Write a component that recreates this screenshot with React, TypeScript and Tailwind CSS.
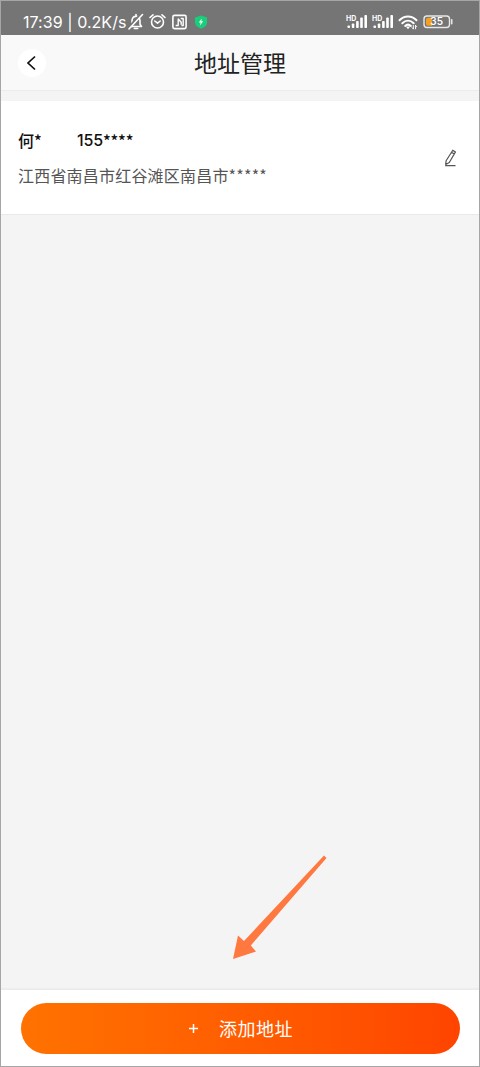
import type { ReactNode } from "react";

const addresses = [
  { id: 1, name: "何*", phone: "155", phoneMask: "****", detail: "江西省南昌市红谷滩区南昌市", mask: "*****" },
];

export default function App() {
  return (
    <div className="relative flex h-[1067px] w-[480px] flex-col overflow-hidden border border-[#a6a6a6] bg-[#f4f4f4] font-['Noto_Sans_CJK_SC',sans-serif]">
      <StatusBar />
      <Header title="地址管理" />
      <main className="flex-1 pt-[10px]">
        {addresses.map((address) => (
          <AddressRow key={address.id} {...address} />
        ))}
      </main>
      <Pointer />
      <footer className="h-[77px] border-t border-[#ebebeb] bg-white pr-[19px] pl-[20px] pt-[13px] shadow-[0_-1px_1px_#eeeeee]">
        <button className="flex h-[51px] w-full items-center rounded-full bg-linear-to-r from-[#ff7200] to-[#ff4400] pl-[167px] text-white">
          <Plus />
          <span className="ml-[20px] pb-[2px] text-[18px] leading-none tracking-[0.5px]">添加地址</span>
        </button>
      </footer>
    </div>
  );
}

function StatusBar() {
  return (
    <div className="flex h-[34px] shrink-0 items-center bg-[#757575] pt-[8px] pl-[22px] text-white">
      <span className="w-[105px] whitespace-nowrap font-[Inter,sans-serif] text-[16px] leading-none tracking-[0.05px]">
        17:39 | 0.2K/s
      </span>
      <StatusIcon width={16}>
        <path d="M2.5 13.5h11L12 11.300V8c0-2.900-1.500-4.600-4-4.600S4 5.100 4 8v3.300zM6.300 15.500h3.400M8 1.500v1.800" />
        <path d="M13 1-.5 16" stroke="#757575" strokeWidth="2.500" />
        <path d="M14.500 1.500 1 16" />
      </StatusIcon>
      <StatusIcon width={17} className="ml-[5px]">
        <circle cx="8.500" cy="9" r="6" />
        <path d="M5.800 8 8.500 10.200 11.200 8M1 4.500 4 1.800M16 4.500 13 1.800" />
      </StatusIcon>
      <StatusIcon width={16} className="ml-[5px]">
        <rect x="1.900" y="2.400" width="13.200" height="13.200" rx="1.500" />
        <path d="M4.700 12.500h2.500V6l3 3.200v2.500M9.700 5.500h2.500v7H10.500" strokeWidth="1.400" strokeLinecap="butt" />
      </StatusIcon>
      <svg width="12" height="14" viewBox="0 0 12 14" className="ml-[8px]">
        <path d="M6 .5 12 2.600v5c0 2.900-2.400 4.900-6 6.200C2.400 12.500 0 10.500 0 7.600v-5z" fill="#17cf7a" />
        <path d="M6.700 3.500 3.800 7.500h1.900l-.7 3 3.200-4.200H6.300z" fill="#fff" />
      </svg>
      <div className="ml-[139px] flex items-center">
        <Signal />
        <Signal className="ml-[3px]" />
        <StatusIcon width={21} className="ml-[3px]">
          <path d="M1.500 7.200c5-5 12-5 17 0M4.300 10.200c3.400-3.200 8-3.200 11.400 0M7.100 12.900c1.800-1.600 4-1.600 5.800 0" strokeWidth="2" />
          <path d="m7.800 13.500 2.200 2.700 2.200-2.700z" fill="currentColor" stroke="none" />
          <path d="M15.300 12.500v3.300m-1.100-1.100 1.100 1.100M17.600 15.800v-3.300m1.100 1.100-1.100-1.100" strokeWidth="1" />
        </StatusIcon>
        <Battery level="35" />
      </div>
    </div>
  );
}

function StatusIcon({ width, className, children }: { width: number; className?: string; children: ReactNode }) {
  return (
    <svg
      width={width}
      height="18"
      viewBox={`0 0 ${width} 18`}
      fill="none"
      stroke="currentColor"
      strokeWidth="1.600"
      strokeLinecap="round"
      strokeLinejoin="round"
      className={className}
    >
      {children}
    </svg>
  );
}

function Signal({ className }: { className?: string }) {
  return (
    <svg width="23" height="16" viewBox="0 0 23 16" fill="currentColor" className={className}>
      <text x="0" y="6.500" fontSize="7" fontWeight="700" fontFamily="Inter, sans-serif">
        HD
      </text>
      <rect x="1.500" y="11.500" width="2.500" height="2.500" rx=".8" />
      <rect x="5.800" y="9.500" width="2.500" height="4.500" rx=".8" />
      <rect x="10.100" y="7" width="2.600" height="7" rx=".8" />
      <rect x="14.200" y="3.500" width="2.600" height="10.500" rx=".8" />
      <rect x="18.400" y="1" width="2.600" height="13" rx=".8" />
    </svg>
  );
}

function Battery({ level }: { level: string }) {
  return (
    <svg width="31" height="14" viewBox="0 0 31 14" className="ml-[4px]">
      <rect x="1" y="1" width="25.500" height="11.500" rx="3" fill="none" stroke="#e8e8e8" strokeWidth="1.400" />
      <path d="M5 2.700h4v8H5a2 2 0 0 1-2-2v-4a2 2 0 0 1 2-2z" fill="#f5a01e" />
      <path d="M28.700 4.700v4" stroke="#e8e8e8" strokeWidth="1.600" strokeLinecap="round" />
      <text x="13.700" y="10.400" textAnchor="middle" fontSize="10" fontWeight="600" fontFamily="Inter, sans-serif" fill="#fff">
        {level}
      </text>
    </svg>
  );
}

function Header({ title }: { title: string }) {
  return (
    <header className="grid h-[56px] shrink-0 grid-cols-[80px_1fr_80px] items-center border-b border-[#ececec] bg-[#f9f9f9]">
      <button className="ml-[17px] flex size-[28px] items-center justify-center rounded-full bg-white" aria-label="返回">
        <svg width="10" height="16" viewBox="0 0 10 16" fill="none" stroke="#111" strokeWidth="1.700">
          <path d="M8 1.500 1 8l7 6.500" />
        </svg>
      </button>
      <h1 className="pb-[1px] text-center text-[23px] leading-none text-[#222]">{title}</h1>
    </header>
  );
}

type AddressRowProps = { name: string; phone: string; phoneMask: string; detail: string; mask: string };

function AddressRow({ name, phone, phoneMask, detail, mask }: AddressRowProps) {
  return (
    <div className="flex h-[114px] items-center border-b border-[#e9e9e9] bg-white pr-[22px] pl-[17px]">
      <div className="flex-1">
        <div className="flex h-[20px] items-center text-[16px] leading-none font-medium text-[#111]">
          <span className="w-[59px]">{name}</span>
          <span className="w-[26px] font-[Inter,sans-serif] tracking-[-0.100px]">{phone}</span>
          <span className="tracking-[-0.200px]">{phoneMask}</span>
        </div>
        <div className="mt-[15px] flex h-[20px] items-center text-[16px] leading-none tracking-[0.200px] text-[#555]">
          <span>{detail}</span>
          <span>{mask}</span>
        </div>
      </div>
      <svg width="13" height="18" viewBox="0 0 13 18" fill="none" stroke="#555" strokeWidth="1.200" strokeLinejoin="round">
        <path d="M8.800 1.200 11.500 2.900 5.300 13.500 1.700 15.500 2.100 11.700zM7.600 3.300l2.700 1.700M1.200 16.700h10.300" />
      </svg>
    </div>
  );
}

function Plus() {
  return (
    <svg width="11" height="11" viewBox="0 0 11 11" fill="none" stroke="currentColor" strokeWidth="1.500">
      <path d="M1 5.500h9M5.500 1v9" />
    </svg>
  );
}

// Arrow that floats over the page and points at the add button
function Pointer() {
  return (
    <svg width="96" height="106" viewBox="0 0 96 106" className="pointer-events-none absolute top-[853px] left-[231px]">
      <path d="M92 1.500 94.500 4 18.800 91.500 24 97.500 1 105 6 81.500 12 87z" fill="#ff7840" />
    </svg>
  );
}
